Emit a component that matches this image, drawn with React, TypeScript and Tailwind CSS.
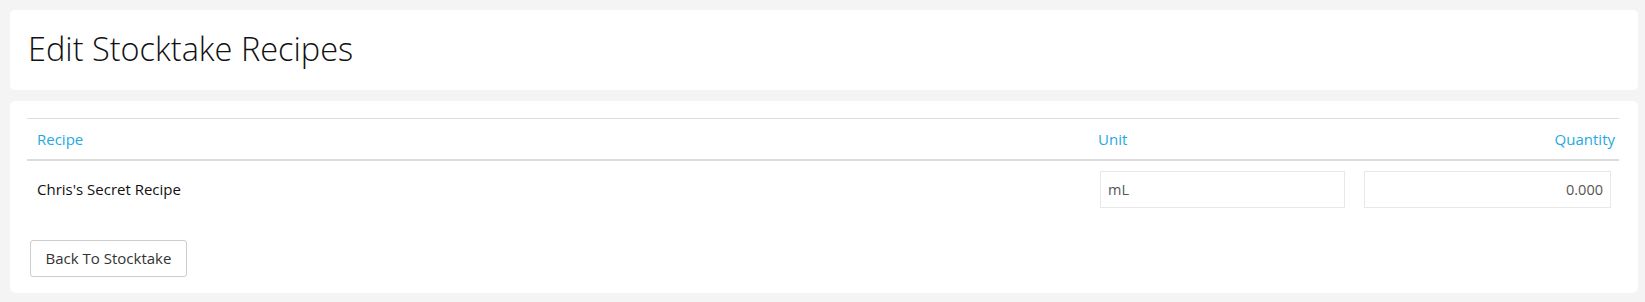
import React from "react";

export default function App() {
  const font = { fontFamily: "'Open Sans', 'Noto Sans', sans-serif" };
  return (
    <div className="min-h-[302px] w-full bg-[#f4f4f4] pt-[10px] pb-[8px] pl-[10px] pr-[7px]" style={font}>
      <div className="flex h-[80px] items-center rounded-[5px] bg-white pl-[18px] pr-[16px] pb-[2px]">
        <h1 className="text-[32.5px] font-light leading-none text-[#111]">Edit Stocktake Recipes</h1>
      </div>
      <div className="mt-[11px] rounded-[5px] bg-white pt-[17px] pb-[16px] pl-[17px] pr-[19px]">
        <div className="border-t border-[#dedede]">
          <div className="grid h-[42px] grid-cols-[1fr_264px_264px] items-center border-b-2 border-[#dcdcdc] text-[15px] text-[#1fa9e1]">
            <div className="px-[10px]">Recipe</div>
            <div className="px-[7px]">Unit</div>
            <div className="pr-[4px] text-right">Quantity</div>
          </div>
          <div className="grid h-[56px] grid-cols-[1fr_264px_264px] items-center text-[15px]">
            <div className="px-[10px] text-[#111]">Chris's Secret Recipe</div>
            <div className="pl-[9px] pr-[10px]">
              <input
                readOnly
                value="mL"
                className="h-[37px] w-full border border-[#e8e8e8] px-[7px] text-[14.5px] text-[#555] outline-none"
                style={font}
              />
            </div>
            <div className="pl-[9px] pr-[8px]">
              <input
                readOnly
                value="0.000"
                className="h-[37px] w-full border border-[#e8e8e8] px-[7px] text-right text-[14.5px] text-[#555] outline-none"
                style={font}
              />
            </div>
          </div>
        </div>
        <button
          className="mt-[23px] ml-[3px] h-[37px] w-[157px] rounded-[3px] border border-[#cccccc] bg-white text-[15px] text-[#333]"
          style={font}
        >
          Back To Stocktake
        </button>
      </div>
    </div>
  );
}
